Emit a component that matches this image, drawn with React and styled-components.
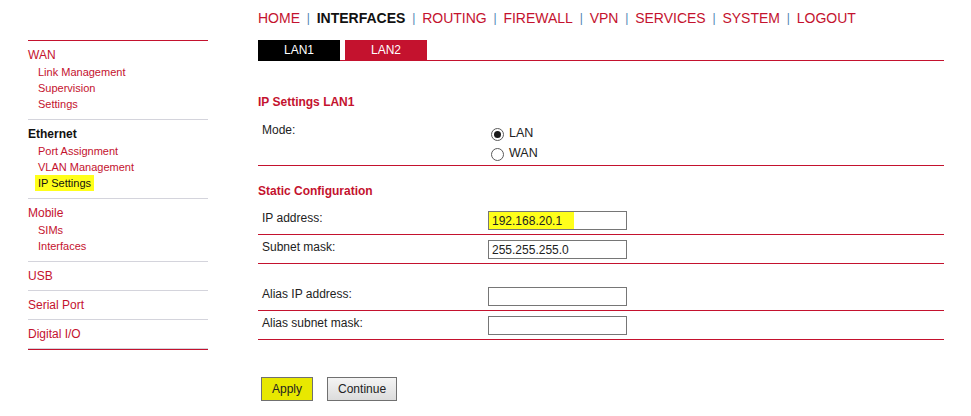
import React from 'react';
import styled, { createGlobalStyle } from 'styled-components';

const RED = '#c4122e';
const GRAY_LINE = '#d4d4dc';

const Global = createGlobalStyle`
  html, body { margin: 0; padding: 0; background: #fff; }
  body { font-family: "Liberation Sans", Arial, sans-serif; color: #222; }
  * { box-sizing: border-box; }
`;

const Page = styled.div`
  display: flex;
  align-items: flex-start;
  gap: 50px;
  padding-left: 28px;
  width: 971px;
  height: 416px;
  overflow: hidden;
`;

/* ---------- sidebar ---------- */
const Sidebar = styled.nav`
  width: 180px;
  margin-top: 40px;
  border-top: 1px solid ${RED};
  border-bottom: 1px solid ${RED};
`;

const Section = styled.div`
  padding: 5px 0;
  border-bottom: 1px solid ${GRAY_LINE};
`;

const SectionTitle = styled.div`
  font-size: 12px;
  line-height: 18px;
  color: ${p => (p.$active ? '#111' : RED)};
  font-weight: ${p => (p.$active ? 700 : 400)};
`;

const ItemList = styled.div`
  padding: 0 0 2px 10px;
`;

const Item = styled.div`
  font-size: 11px;
  line-height: 16px;
  color: ${p => (p.$current ? '#111' : RED)};
`;

const Marker = styled.span`
  background: #ffff1a;
  padding: 2px 3px;
  margin-left: -3px;
`;

/* ---------- main ---------- */
const Main = styled.main`
  width: 686px;
  display: flex;
  flex-direction: column;
`;

const TopNav = styled.div`
  display: flex;
  align-items: center;
  margin-top: 10px;
  height: 16px;
  font-size: 14px;
  line-height: 16px;
  white-space: nowrap;
`;

const NavLink = styled.span`
  color: ${p => (p.$active ? '#111' : RED)};
  font-weight: ${p => (p.$active ? 700 : 400)};
`;

const Sep = styled.span`
  color: #4f86b5;
  font-size: 12px;
  margin: 0 6.8px;
`;

const Tabs = styled.div`
  display: flex;
  gap: 5px;
  margin-top: 14px;
  height: 21px;
  border-bottom: 1px solid ${RED};
`;

const Tab = styled.div`
  width: 82px;
  height: ${p => (p.$active ? '21px' : '20px')};
  background: ${p => (p.$active ? '#000' : RED)};
  color: #fff;
  font-size: 12px;
  line-height: 21px;
  text-align: center;
`;

const Heading = styled.h3`
  margin: ${p => p.$margin};
  font-size: 12px;
  line-height: 14px;
  font-weight: 700;
  color: ${RED};
`;

const Row = styled.div`
  display: grid;
  grid-template-columns: 230px 1fr;
  padding: ${p => (p.$tall ? '5px 0 2px' : '5px 0 4px')};
  border-bottom: 1px solid ${RED};
  font-size: 12px;
  line-height: 14px;
`;

const Spacer = styled.div`
  height: 18px;
`;

const Label = styled.div`
  padding-left: 4px;
  color: #222;
`;

const RadioGroup = styled.div`
  display: flex;
  flex-direction: column;
`;

const RadioOption = styled.label`
  display: flex;
  align-items: center;
  height: 20px;
  font-size: 12.5px;
  color: #222;
`;

const Radio = styled.input.attrs({ type: 'radio' })`
  appearance: none;
  width: 13px;
  height: 13px;
  margin: 2px 5px 0 3px;
  border: 1px solid #5a5a5a;
  border-radius: 50%;
  background: #fff;
  display: grid;
  place-items: center;
  &:checked::after {
    content: '';
    width: 7px;
    height: 7px;
    border-radius: 50%;
    background: #1a1a1a;
  }
`;

const Field = styled.input`
  width: 139px;
  height: 19px;
  margin: 0;
  padding: 0 3px;
  border: 1px solid #767676;
  border-radius: 0;
  font-family: "Liberation Sans", Arial, sans-serif;
  font-size: 12px;
  color: #222;
  background: ${p =>
    p.$highlight ? 'linear-gradient(to right, #ffff1a 85px, #fff 85px)' : '#fff'};
  outline: none;
`;

const Buttons = styled.div`
  display: flex;
  gap: 14px;
  margin-top: 37px;
  padding-left: 3px;
`;

const Button = styled.button`
  height: 24px;
  padding: 0 10px;
  border: 1px solid #707070;
  border-radius: 0;
  font-family: "Liberation Sans", Arial, sans-serif;
  font-size: 12px;
  color: #222;
  background: ${p =>
    p.$highlight ? '#e8e800' : 'linear-gradient(#f4f4f4, #dcdcdc)'};
`;

const sidebar = [
  { title: 'WAN', items: ['Link Management', 'Supervision', 'Settings'] },
  { title: 'Ethernet', active: true, items: ['Port Assignment', 'VLAN Management', 'IP Settings'], current: 'IP Settings' },
  { title: 'Mobile', items: ['SIMs', 'Interfaces'] },
  { title: 'USB', items: [] },
  { title: 'Serial Port', items: [] },
  { title: 'Digital I/O', items: [] },
];

const nav = ['HOME', 'INTERFACES', 'ROUTING', 'FIREWALL', 'VPN', 'SERVICES', 'SYSTEM', 'LOGOUT'];

export default function App() {
  return (
    <>
      <Global />
      <Page>
        <Sidebar>
          {sidebar.map(s => (
            <Section key={s.title}>
              <SectionTitle $active={s.active}>{s.title}</SectionTitle>
              {s.items.length > 0 && (
                <ItemList>
                  {s.items.map(i => (
                    <Item key={i} $current={s.current === i}>
                      {s.current === i ? <Marker>{i}</Marker> : i}
                    </Item>
                  ))}
                </ItemList>
              )}
            </Section>
          ))}
        </Sidebar>

        <Main>
          <TopNav>
            {nav.map((n, idx) => (
              <React.Fragment key={n}>
                {idx > 0 && <Sep>|</Sep>}
                <NavLink $active={n === 'INTERFACES'}>{n}</NavLink>
              </React.Fragment>
            ))}
          </TopNav>

          <Tabs>
            <Tab $active>LAN1</Tab>
            <Tab>LAN2</Tab>
          </Tabs>

          <Heading $margin="34px 0 9px">IP Settings LAN1</Heading>
          <Row $tall>
            <Label>Mode:</Label>
            <RadioGroup>
              <RadioOption>
                <Radio name="mode" defaultChecked />
                LAN
              </RadioOption>
              <RadioOption>
                <Radio name="mode" />
                WAN
              </RadioOption>
            </RadioGroup>
          </Row>

          <Heading $margin="18px 0 8px">Static Configuration</Heading>
          <Row>
            <Label>IP address:</Label>
            <div><Field $highlight defaultValue="192.168.20.1" /></div>
          </Row>
          <Row>
            <Label>Subnet mask:</Label>
            <div><Field defaultValue="255.255.255.0" /></div>
          </Row>
          <Spacer />
          <Row>
            <Label>Alias IP address:</Label>
            <div><Field defaultValue="" /></div>
          </Row>
          <Row>
            <Label>Alias subnet mask:</Label>
            <div><Field defaultValue="" /></div>
          </Row>

          <Buttons>
            <Button $highlight>Apply</Button>
            <Button>Continue</Button>
          </Buttons>
        </Main>
      </Page>
    </>
  );
}
